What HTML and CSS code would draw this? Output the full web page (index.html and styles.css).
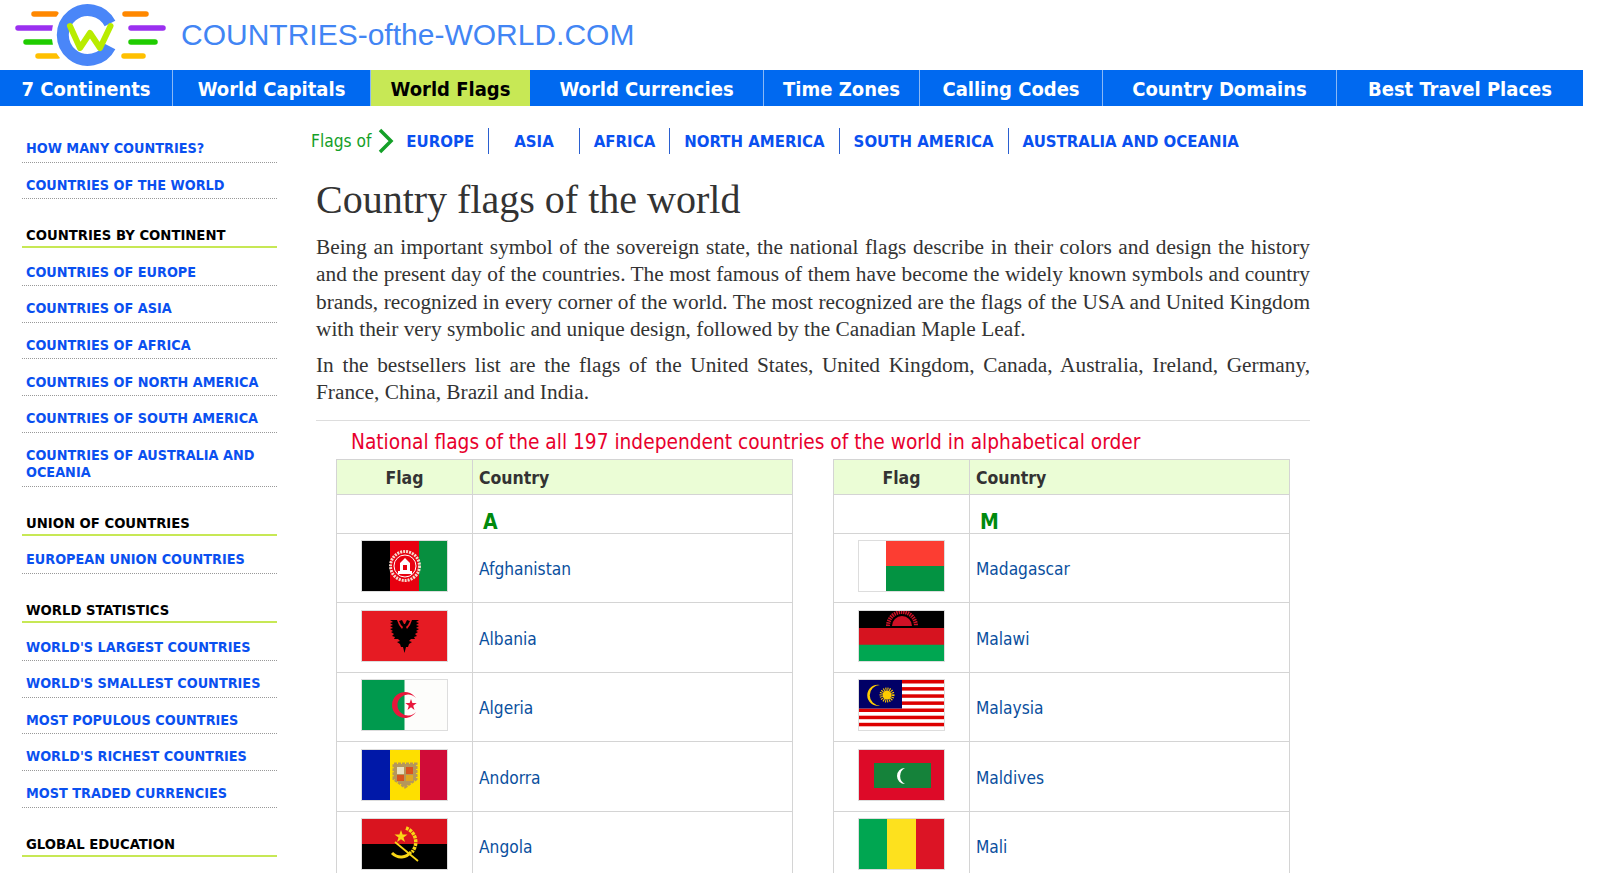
FILE: index.html
```html
<!DOCTYPE html>
<html>
<head>
  <meta charset="UTF-8">
  <title>Country flags of the world</title>
  <link rel="stylesheet" href="styles.css">
</head>
<body>
  <header class="top">
    <svg class="logo" width="170" height="70" viewBox="0 0 170 70">
      <g stroke-width="5.500" stroke-linecap="round">
        <path d="M34 14H56M125 14H146" stroke="#ff8800"/>
        <path d="M18 28H52M131 28H163" stroke="#9b30f0"/>
        <path d="M26 42H52M131 42H155" stroke="#1fcc00"/>
        <path d="M38 56H58M124 56H143" stroke="#ffc000"/>
      </g>
      <path d="M110 23.500A25 25 0 1 0 110 46.500" fill="none" stroke="#fff" stroke-width="22"/>
      <path d="M110 23.500A25 25 0 1 0 110 46.500" fill="none" stroke="#4a86f8" stroke-width="12"/>
      <path d="M70 26L80 48L90 33L100 48L110.500 26" fill="none" stroke="#b8ec00" stroke-width="6" stroke-linecap="round" stroke-linejoin="round"/>
    </svg>
    <a class="site-name" href="#">COUNTRIES-ofthe-WORLD.COM</a>
  </header>

  <nav class="mainnav">
    <a href="#">7 Continents</a>
    <a href="#">World Capitals</a>
    <a href="#" class="active">World Flags</a>
    <a href="#">World Currencies</a>
    <a href="#">Time Zones</a>
    <a href="#">Calling Codes</a>
    <a href="#">Country Domains</a>
    <a href="#">Best Travel Places</a>
  </nav>

  <div class="layout">
    <aside class="sidebar">
      <ul>
        <li><a href="#">HOW MANY COUNTRIES?</a></li>
        <li><a href="#">COUNTRIES OF THE WORLD</a></li>
      </ul>
      <h4>COUNTRIES BY CONTINENT</h4>
      <ul>
        <li><a href="#">COUNTRIES OF EUROPE</a></li>
        <li><a href="#">COUNTRIES OF ASIA</a></li>
        <li><a href="#">COUNTRIES OF AFRICA</a></li>
        <li><a href="#">COUNTRIES OF NORTH AMERICA</a></li>
        <li><a href="#">COUNTRIES OF SOUTH AMERICA</a></li>
        <li><a href="#">COUNTRIES OF AUSTRALIA AND OCEANIA</a></li>
      </ul>
      <h4>UNION OF COUNTRIES</h4>
      <ul>
        <li><a href="#">EUROPEAN UNION COUNTRIES</a></li>
      </ul>
      <h4>WORLD STATISTICS</h4>
      <ul>
        <li><a href="#">WORLD'S LARGEST COUNTRIES</a></li>
        <li><a href="#">WORLD'S SMALLEST COUNTRIES</a></li>
        <li><a href="#">MOST POPULOUS COUNTRIES</a></li>
        <li><a href="#">WORLD'S RICHEST COUNTRIES</a></li>
        <li><a href="#">MOST TRADED CURRENCIES</a></li>
      </ul>
      <h4>GLOBAL EDUCATION</h4>
    </aside>

    <main class="content">
      <div class="subnav">
        <span class="subnav-label">Flags of</span>
        <svg class="chevron" width="16" height="26" viewBox="0 0 16 26"><path d="M2 2L13 13L2 24" fill="none" stroke="#14a028" stroke-width="3.500"/></svg>
        <a href="#" class="w-eu">EUROPE</a>
        <a href="#" class="w-as">ASIA</a>
        <a href="#">AFRICA</a>
        <a href="#">NORTH AMERICA</a>
        <a href="#">SOUTH AMERICA</a>
        <a href="#" class="last">AUSTRALIA AND OCEANIA</a>
      </div>

      <article class="article">
        <h1>Country flags of the world</h1>
        <p>Being an important symbol of the sovereign state, the national flags describe in their colors and design the history and the present day of the countries. The most famous of them have become the widely known symbols and country brands, recognized in every corner of the world. The most recognized are the flags of the USA and United Kingdom with their very symbolic and unique design, followed by the Canadian Maple Leaf.</p>
        <p>In the bestsellers list are the flags of the United States, United Kingdom, Canada, Australia, Ireland, Germany, France, China, Brazil and India.</p>
        <hr>
        <h2>National flags of the all 197 independent countries of the world in alphabetical order</h2>

        <div class="tables">
          <table>
            <tr><th class="col-flag">Flag</th><th class="col-name">Country</th></tr>
            <tr class="letter"><td></td><td>A</td></tr>
            <tr>
              <td><svg class="flag" viewBox="0 0 85 50">
                <rect width="85" height="50" fill="#078f3f"/><rect width="57" height="50" fill="#e8000f"/><rect width="28" height="50" fill="#000"/>
                <circle cx="43" cy="25" r="14.500" fill="none" stroke="#f6dcd0" stroke-width="3" stroke-dasharray="2 1"/>
                <circle cx="43" cy="25" r="11" fill="none" stroke="#fff" stroke-width="1"/>
                <path d="M36 33H50V30H48V22L43 17L38 22V30H36Z" fill="#fff"/><rect x="41" y="24" width="4" height="5" fill="#e8000f"/>
              </svg></td>
              <td><a href="#">Afghanistan</a></td>
            </tr>
            <tr>
              <td><svg class="flag" viewBox="0 0 85 50">
                <rect width="85" height="50" fill="#e61b23"/>
                <path d="M42 13L40 9L37 10L39 14L41 16L40 18L37 14L35 9L28 9L31 11L28 12L31 14L28 15L31 17L28 18L31 20L29 21L32 23L30 25L33 26L32 28L36 28L38 30L35 31L38 33L39 36L41 36L42.500 42L44 36L46 36L47 33L50 31L47 30L49 28L53 28L52 26L55 25L53 23L56 21L54 20L57 18L54 17L57 15L54 14L57 12L54 11L57 9L50 9L48 14L45 18L44 16L46 14L48 10L45 9L43 13Z" fill="#000"/>
              </svg></td>
              <td><a href="#">Albania</a></td>
            </tr>
            <tr>
              <td><svg class="flag" viewBox="0 0 85 50">
                <rect width="85" height="50" fill="#fdfdfb"/><rect width="42.500" height="50" fill="#009a4e"/>
                <path d="M54.300 18.600A13 13 0 1 0 54.300 31.400A10.500 10.500 0 1 1 54.300 18.600Z" fill="#e8173b"/>
                <path d="M49 19L50.350 23.100H54.700L51.200 25.700L52.500 29.900L49 27.300L45.500 29.900L46.800 25.700L43.300 23.100H47.650Z" fill="#e8173b"/>
              </svg></td>
              <td><a href="#">Algeria</a></td>
            </tr>
            <tr>
              <td><svg class="flag" viewBox="0 0 85 50">
                <rect width="85" height="50" fill="#d00c38"/><rect width="58" height="50" fill="#fedf00"/><rect width="28" height="50" fill="#0018a8"/>
                <path d="M32 14H54V29L43 37L32 29Z" fill="#b5975a" stroke="#b5975a" stroke-width="3" stroke-dasharray="3 1"/>
                <rect x="35" y="17" width="7" height="7" fill="#e8e0c0"/><rect x="44" y="17" width="7" height="7" fill="#d9531e"/>
                <rect x="35" y="25" width="7" height="6" fill="#d9531e"/><rect x="44" y="25" width="7" height="6" fill="#e0a820"/>
              </svg></td>
              <td><a href="#">Andorra</a></td>
            </tr>
            <tr>
              <td><svg class="flag" viewBox="0 0 85 50">
                <rect width="85" height="50" fill="#000"/><rect width="85" height="25" fill="#d9141f"/>
                <path d="M44 9A15 15 0 0 1 50 33" fill="none" stroke="#f9d616" stroke-width="3.500" stroke-dasharray="3 .8"/>
                <path d="M30 34C36 40 44 39 49 33" fill="none" stroke="#f9d616" stroke-width="3"/>
                <path d="M33 23L56 42" fill="none" stroke="#f9d616" stroke-width="1.800"/>
                <path d="M39 11L40.600 15.500H45.500L41.500 18.500L43 23L39 20.200L35 23L36.500 18.500L32.500 15.500H37.400Z" fill="#f9d616"/>
              </svg></td>
              <td><a href="#">Angola</a></td>
            </tr>
          </table>

          <table>
            <tr><th class="col-flag">Flag</th><th class="col-name">Country</th></tr>
            <tr class="letter"><td></td><td>M</td></tr>
            <tr>
              <td><svg class="flag" viewBox="0 0 85 50">
                <rect width="85" height="50" fill="#fff"/><rect x="27" width="58" height="25" fill="#fc3d32"/><rect x="27" y="25" width="58" height="25" fill="#039342"/>
              </svg></td>
              <td><a href="#">Madagascar</a></td>
            </tr>
            <tr>
              <td><svg class="flag" viewBox="0 0 85 50">
                <rect width="85" height="50" fill="#00a651"/><rect width="85" height="33.500" fill="#d6131f"/><rect width="85" height="17" fill="#000"/>
                <circle cx="43" cy="15" r="14" fill="none" stroke="#ce1126" stroke-width="4" stroke-dasharray="1.500 .8"/>
                <circle cx="43" cy="15" r="10" fill="#ce1126"/>
                <rect y="15" width="85" height="2" fill="#000"/><rect y="17" width="85" height="16.500" fill="#d6131f"/>
              </svg></td>
              <td><a href="#">Malawi</a></td>
            </tr>
            <tr>
              <td><svg class="flag" viewBox="0 0 85 50">
                <rect width="85" height="50" fill="#fff"/>
                <g fill="#dd0000">
                  <rect width="85" height="3.500"/><rect y="7.100" width="85" height="3.500"/><rect y="14.300" width="85" height="3.500"/><rect y="21.400" width="85" height="3.500"/>
                  <rect y="28.500" width="85" height="3.500"/><rect y="35.700" width="85" height="3.500"/><rect y="42.800" width="85" height="3.500"/>
                </g>
                <rect width="43" height="28.500" fill="#010066"/>
                <path d="M21 5A10.500 10.500 0 1 0 21 25.500A9.500 9.500 0 1 1 21 5Z" fill="#ffcc00"/>
                <circle cx="28" cy="15" r="6" fill="none" stroke="#ffcc00" stroke-width="3" stroke-dasharray="1 1"/>
                <circle cx="28" cy="15" r="4.500" fill="#ffcc00"/>
              </svg></td>
              <td><a href="#">Malaysia</a></td>
            </tr>
            <tr>
              <td><svg class="flag" viewBox="0 0 85 50">
                <rect width="85" height="50" fill="#dd0a28"/><rect x="15" y="13" width="57" height="25" fill="#15823a"/>
                <path d="M46 18A8 8 0 1 0 46 34A9 9 0 0 1 46 18Z" fill="#fff"/>
              </svg></td>
              <td><a href="#">Maldives</a></td>
            </tr>
            <tr>
              <td><svg class="flag" viewBox="0 0 85 50">
                <rect width="85" height="50" fill="#dc1425"/><rect width="57" height="50" fill="#fde11e"/><rect width="28" height="50" fill="#00a651"/>
              </svg></td>
              <td><a href="#">Mali</a></td>
            </tr>
          </table>
        </div>
      </article>
    </main>
  </div>
</body>
</html>
```

FILE: styles.css
```css
html {
  height: 873px;
  overflow: hidden;
}

body {
  margin: 0;
  width: 1583px;
  font-family: "DejaVu Sans", Tahoma, sans-serif;
  font-stretch: condensed;
  background: #fff;
}

a {
  text-decoration: none;
}

.top {
  display: flex;
  align-items: center;
  height: 70px;
}

.logo {
  display: block;
  flex: none;
}

.site-name {
  margin-left: 11px;
  font-family: "Liberation Sans", Arial, sans-serif;
  font-stretch: normal;
  font-size: 30px;
  color: #4285f4;
}

.mainnav {
  display: grid;
  grid-template-columns: 173px 198px 159px 234px 156px 183px 234px 246px;
  height: 36px;
  background: #0069f0;
}

.mainnav a {
  display: flex;
  align-items: center;
  justify-content: center;
  padding-top: 2px;
  border-right: 1px solid #8ab8f5;
  color: #fff;
  font-size: 20px;
  font-weight: bold;
}

.mainnav a:last-child {
  border-right: 0;
}

.mainnav a.active {
  background: #c7e855;
  border-right: 0;
  color: #000;
}

.layout {
  display: flex;
}

.sidebar {
  flex: none;
  width: 255px;
  margin: 24px 0 0 22px;
}

.sidebar ul {
  margin: 0;
  padding: 0;
  list-style: none;
}

.sidebar li {
  margin-bottom: 4.100px;
  padding: 10px 0 4px 4px;
  border-bottom: 1px dotted #999;
  font-size: 14.300px;
  line-height: 17.500px;
}

.sidebar li a {
  color: #0a50f0;
  font-weight: bold;
}

.sidebar h4 {
  margin: 19.200px 0 5.500px;
  padding: 8px 0 3px 4px;
  border-bottom: 2px solid #c7e855;
  color: #000;
  font-size: 14.700px;
  font-weight: bold;
  line-height: 17px;
}

.content {
  flex: none;
  width: 999px;
  margin-left: 34px;
}

.subnav {
  display: flex;
  align-items: center;
  height: 26px;
  margin-top: 22px;
  font-size: 17.200px;
}

.subnav-label {
  color: #14a028;
  margin-right: 7px;
}

.chevron {
  margin-right: 12px;
}

.subnav a {
  display: flex;
  align-items: center;
  height: 26px;
  padding: 0 14px;
  border-right: 1px solid #2a5fd0;
  color: #0a50f0;
  font-size: 16.650px;
  font-weight: bold;
}

.subnav a.w-eu {
  padding: 0 14px 0 0;
}

.subnav a.w-as {
  padding: 0 25px;
}

.subnav a.last {
  border-right: 0;
}

.article {
  padding-left: 5px;
}

h1 {
  margin: 23px 0 11px;
  font-family: "Liberation Serif", "Times New Roman", serif;
  font-stretch: normal;
  font-size: 40px;
  font-weight: normal;
  line-height: 46px;
  color: #333;
}

.article p {
  margin: 0 0 9px;
  font-family: "Liberation Serif", "Times New Roman", serif;
  font-stretch: normal;
  font-size: 21.330px;
  line-height: 27.300px;
  color: #333;
  text-align: justify;
}

hr {
  height: 1px;
  margin: 13px 0 0;
  border: 0;
  background: #ddd;
}

h2 {
  margin: 8px 0 4px 35px;
  font-size: 20.700px;
  font-weight: normal;
  line-height: 26px;
  color: #e8002d;
}

.tables {
  display: flex;
  gap: 40px;
  margin-left: 20px;
}

table {
  width: 457px;
  border-collapse: collapse;
  table-layout: fixed;
}

th, td {
  padding: 0;
  border: 1px solid #d4d4d4;
}

th {
  height: 32px;
  padding-top: 2px;
  background: #ebfdd6;
  color: #333;
  font-size: 17.500px;
}

.col-flag {
  width: 135px;
}

.col-name {
  text-align: left;
  padding-left: 6px;
}

td {
  height: 68.500px;
  text-align: center;
}

td + td {
  height: 66.500px;
  padding-top: 2px;
  padding-left: 6px;
  text-align: left;
  font-size: 17.200px;
}

td a {
  color: #0a4f9e;
}

.letter td {
  height: 38px;
}

.letter td + td {
  height: 38px;
  padding: 0 0 0 10px;
  color: #008a0e;
  font-size: 21px;
  font-weight: bold;
  line-height: 22px;
  vertical-align: bottom;
}

.flag {
  display: block;
  width: 85px;
  height: 50px;
  margin: 0 auto 4px;
  border: 1px solid #ddd;
}
```
